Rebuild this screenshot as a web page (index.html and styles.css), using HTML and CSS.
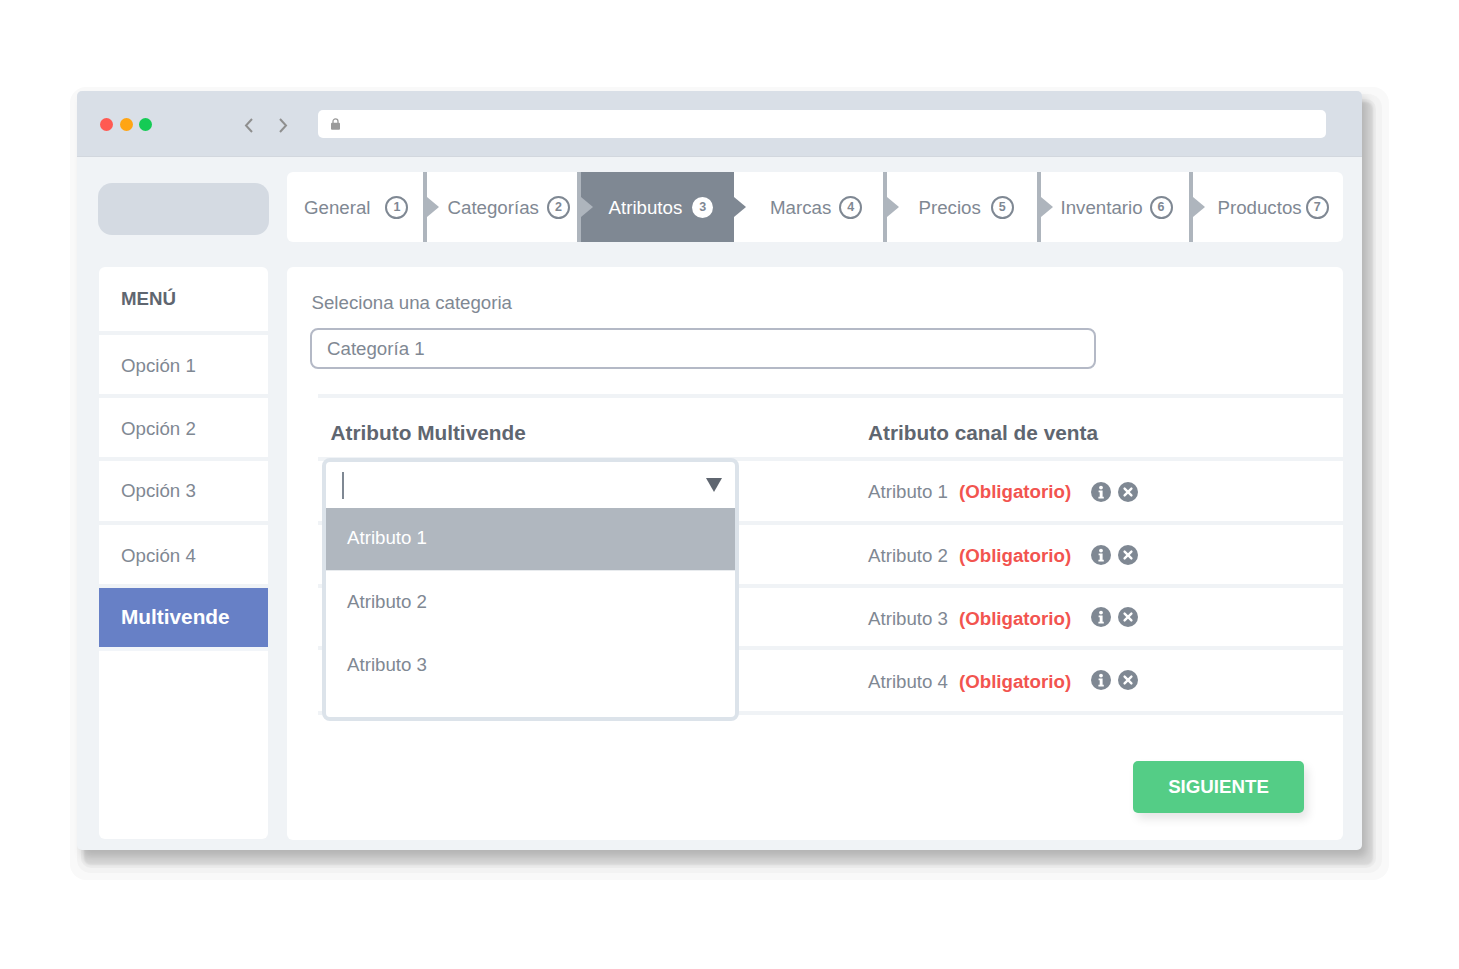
FILE: index.html
```html
<!DOCTYPE html>
<html lang="es">
<head>
<meta charset="utf-8">
<title>Multivende</title>
<link rel="stylesheet" href="styles.css">
</head>
<body>
<div class="window">
  <header class="titlebar">
    <div class="dots"><i class="dot red"></i><i class="dot orange"></i><i class="dot green"></i></div>
    <div class="nav">
      <svg width="11" height="17" viewBox="0 0 11 17"><path d="M9 2 3 8.5 9 15" fill="none" stroke="#8f8f8f" stroke-width="2"/></svg>
      <svg width="11" height="17" viewBox="0 0 11 17"><path d="M2 2l6 6.5L2 15" fill="none" stroke="#8f8f8f" stroke-width="2"/></svg>
    </div>
    <div class="url">
      <svg width="9" height="12" viewBox="0 0 9 12"><path d="M2 5V3.4a2.5 2.5 0 0 1 5 0V5" fill="none" stroke="#9a9a9a" stroke-width="1.3"/><rect y="4.8" width="9" height="7" rx="1" fill="#9a9a9a"/></svg>
    </div>
  </header>
  <div class="content">
    <div class="logo"></div>
    <nav class="tabs">
      <div class="tab t1"><span>General</span><b class="num">1</b></div>
      <div class="tab t2 sep"><span>Categorías</span><b class="num">2</b></div>
      <div class="tab t3 sep active"><span>Atributos</span><b class="num">3</b></div>
      <div class="tab t4 after-active"><span>Marcas</span><b class="num">4</b></div>
      <div class="tab t5 sep"><span>Precios</span><b class="num">5</b></div>
      <div class="tab t6 sep"><span>Inventario</span><b class="num">6</b></div>
      <div class="tab t7 sep"><span>Productos</span><b class="num">7</b></div>
    </nav>
    <aside class="side">
      <div class="side-item menu">MENÚ</div>
      <div class="side-item">Opción 1</div>
      <div class="side-item">Opción 2</div>
      <div class="side-item">Opción 3</div>
      <div class="side-item">Opción 4</div>
      <div class="side-item current">Multivende</div>
    </aside>
    <main class="main">
      <label class="label">Seleciona una categoria</label>
      <div class="field">Categoría 1</div>
      <section class="attrs">
        <div class="row head"><h3>Atributo Multivende</h3><h3>Atributo canal de venta</h3></div>
        <div class="row item"><span>Atributo 1</span><strong>(Obligatorio)</strong>
          <svg class="ico" viewBox="0 0 20 20"><circle cx="10" cy="10" r="10"/><circle cx="10" cy="5.6" r="1.9" class="w"/><path class="w" d="M7.6 8.5h4v6.2h1.2v1.8H7.4v-1.8h1.3v-4.4H7.6z"/></svg>
          <svg class="ico" viewBox="0 0 20 20"><circle cx="10" cy="10" r="10"/><path class="x" d="M6.6 6.6l6.8 6.8M13.4 6.6l-6.8 6.8"/></svg>
        </div>
        <div class="row item"><span>Atributo 2</span><strong>(Obligatorio)</strong>
          <svg class="ico" viewBox="0 0 20 20"><circle cx="10" cy="10" r="10"/><circle cx="10" cy="5.6" r="1.9" class="w"/><path class="w" d="M7.6 8.5h4v6.2h1.2v1.8H7.4v-1.8h1.3v-4.4H7.6z"/></svg>
          <svg class="ico" viewBox="0 0 20 20"><circle cx="10" cy="10" r="10"/><path class="x" d="M6.6 6.6l6.8 6.8M13.4 6.6l-6.8 6.8"/></svg>
        </div>
        <div class="row item"><span>Atributo 3</span><strong>(Obligatorio)</strong>
          <svg class="ico" viewBox="0 0 20 20"><circle cx="10" cy="10" r="10"/><circle cx="10" cy="5.6" r="1.9" class="w"/><path class="w" d="M7.6 8.5h4v6.2h1.2v1.8H7.4v-1.8h1.3v-4.4H7.6z"/></svg>
          <svg class="ico" viewBox="0 0 20 20"><circle cx="10" cy="10" r="10"/><path class="x" d="M6.6 6.6l6.8 6.8M13.4 6.6l-6.8 6.8"/></svg>
        </div>
        <div class="row item"><span>Atributo 4</span><strong>(Obligatorio)</strong>
          <svg class="ico" viewBox="0 0 20 20"><circle cx="10" cy="10" r="10"/><circle cx="10" cy="5.6" r="1.9" class="w"/><path class="w" d="M7.6 8.5h4v6.2h1.2v1.8H7.4v-1.8h1.3v-4.4H7.6z"/></svg>
          <svg class="ico" viewBox="0 0 20 20"><circle cx="10" cy="10" r="10"/><path class="x" d="M6.6 6.6l6.8 6.8M13.4 6.6l-6.8 6.8"/></svg>
        </div>
        <div class="dropdown">
          <div class="search"><i class="caret"></i><i class="arrow"></i></div>
          <div class="opt selected">Atributo 1</div>
          <div class="opt">Atributo 2</div>
          <div class="opt">Atributo 3</div>
        </div>
      </section>
      <button class="next">SIGUIENTE</button>
    </main>
  </div>
</div>
</body>
</html>
```
FILE: styles.css
```css
* { box-sizing: border-box; }
html, body { margin: 0; height: 100%; }
body {
  background: #fff;
  padding: 91px 0 0 77px;
  font-family: "Liberation Sans", Arial, sans-serif;
  font-size: 18.7px;
  color: #7f8893;
  overflow: hidden;
}
.window {
  width: 1285px;
  height: 759px;
  background: #f0f3f6;
  border-radius: 5px;
  box-shadow:
    5px 7px 9px rgba(0,0,0,.17),
    9px 13px 2px 2px #d8d8d8,
    9px 13px 0 5px #ebebeb,
    10px 13px 0 10px #f3f3f3,
    10px 13px 0 17px #f9f9f9;
  display: flex;
  flex-direction: column;
}
.titlebar {
  height: 66px;
  flex: none;
  background: #d9dfe7;
  border-bottom: 1px solid #d2d7de;
  border-radius: 5px 5px 0 0;
  display: flex;
  padding: 19px 36px 0 23px;
}
.dots { display: flex; gap: 6.5px; width: 143px; padding-top: 8px; }
.dot { width: 13px; height: 13px; border-radius: 50%; display: block; }
.red { background: #ff5a52; }
.orange { background: #ffa514; }
.green { background: #15cb55; }
.nav { display: flex; gap: 24px; width: 75px; padding-top: 7px; height: 28px; }
.url {
  flex: 1;
  height: 28px;
  background: #fff;
  border-radius: 5px;
  padding: 8px 13px;
  display: flex;
}
.content {
  flex: 1;
  display: grid;
  grid-template-columns: 171px 1056px;
  grid-template-rows: 70px 573px;
  column-gap: 18px;
  row-gap: 25px;
  padding: 15px 0 0 21px;
}
.logo {
  background: #d4dae2;
  border-radius: 14px;
  height: 52px;
  margin-top: 11px;
}
.tabs {
  display: flex;
  background: #fff;
  border-radius: 6px;
  height: 70px;
}
.tab {
  position: relative;
  display: flex;
  align-items: center;
  height: 70px;
  flex: none;
}
.tab span { padding-top: 1px; }
.sep { border-left: 4.5px solid #aeb5bd; }
.sep::after, .after-active::after {
  content: "";
  position: absolute;
  left: 0;
  top: 25px;
  width: 12px;
  height: 20px;
  background: #aeb5bd;
  clip-path: polygon(0 0, 100% 50%, 0 100%);
}
.after-active::after { background: #7f8893; }
.t1 { width: 136px; padding-left: 17px; gap: 15px; }
.t2 { width: 154px; padding-left: 20.5px; gap: 8px; }
.t3 { width: 157px; padding-left: 27.5px; gap: 10px; }
.t4 { width: 149px; padding-left: 36px; gap: 8px; }
.t5 { width: 154px; padding-left: 31.5px; gap: 10px; }
.t6 { width: 152px; padding-left: 19.5px; gap: 7px; }
.t7 { width: 154px; padding-left: 24.5px; gap: 4px; }
.active { background: #7f8893; color: #fff; }
.num {
  width: 23px;
  height: 23px;
  border: 2px solid #7f8893;
  border-radius: 50%;
  font-size: 12.5px;
  display: flex;
  align-items: center;
  justify-content: center;
}
.active .num { background: #fff; color: #7f8893; width: 21px; height: 21px; border: 0; }
.side {
  background: #fff;
  border-radius: 6px;
  margin: 0 1px 1px;
  overflow: hidden;
}
.side-item {
  height: 63px;
  border-bottom: 4px solid #f0f3f6;
  padding: 2px 0 0 22px;
  display: flex;
  align-items: center;
}
.side-item.menu { height: 68px; font-weight: 700; color: #5f6670; padding-top: 0; }
.side-item.current {
  background: #6780c6;
  background-clip: padding-box;
  color: #fff;
  font-weight: 700;
  font-size: 20.8px;
  padding: 0 0 2px 22px;
  border-bottom-color: #f2f5f9;
}
.side-item:nth-child(4) { height: 64px; padding-top: 0; }
.main {
  background: #fff;
  border-radius: 6px;
  display: flex;
  flex-direction: column;
}
.label { display: block; height: 22px; line-height: 22px; margin: 25px 0 14px 24.5px; }
.field {
  width: 786px;
  height: 41px;
  margin-left: 23px;
  border: 2px solid #b4b9c6;
  border-radius: 8px;
  padding-left: 15px;
  display: flex;
  align-items: center;
}
.attrs {
  position: relative;
  margin: 25px 0 0 31px;
  border-bottom: 4px solid #f0f3f6;
}
.row { border-top: 4px solid #f0f3f6; display: grid; align-items: center; height: 63px; }
.head { grid-template-columns: 550px 1fr; padding-left: 12.5px; }
.head h3 { margin: 0; font-size: 20.8px; color: #5f6670; line-height: 70px; height: 59px; }
.head h3 + h3 { margin-left: -12.5px; }
.item { grid-template-columns: 91px 132px 27px 20px; padding-left: 550px; }
.item span, .item strong { padding-top: 1px; }
.item:nth-child(2) { height: 64px; }
.item:nth-child(2) .ico { margin-top: 1px; }
.item:nth-child(3) span, .item:nth-child(3) strong { padding-top: 2px; }
.item:nth-child(4) { height: 62px; }
.item:nth-child(4) span, .item:nth-child(4) strong { padding-top: 3px; }
.item:nth-child(5) { height: 65px; }
.item:nth-child(5) span, .item:nth-child(5) strong { padding-top: 2px; }
.item:nth-child(5) .ico { margin-top: -1px; }
.item strong { color: #f2544f; font-size: 18.7px; }
.ico { width: 20px; height: 20px; display: block; }
.ico circle { fill: #7f8893; }
.ico .w { fill: #fff; }
.ico .x { stroke: #fff; stroke-width: 2.4; fill: none; stroke-linecap: round; }
.dropdown {
  position: absolute;
  left: 4px;
  top: 64px;
  width: 417px;
  height: 263px;
  background: #fff;
  border: 4px solid #dce3ea;
  border-radius: 8px;
  overflow: hidden;
}
.search {
  height: 46px;
  display: flex;
  justify-content: space-between;
  align-items: center;
  padding: 0 13px 0 16px;
}
.caret { width: 2px; height: 27px; background: #7f8893; display: block; }
.arrow {
  width: 16px;
  height: 14px;
  background: #5f6670;
  clip-path: polygon(0 0, 100% 0, 50% 100%);
  display: block;
}
.opt { height: 63px; padding: 0 0 2px 21px; display: flex; align-items: center; }
.opt.selected { background: #b0b7bf; color: #fff; padding-bottom: 3px; border-bottom: 1px solid #e8ebee; }
.next {
  align-self: flex-end;
  margin: 46px 39px 0 0;
  width: 171px;
  height: 52px;
  background: #54cd86;
  border: 0;
  border-radius: 5px;
  color: #fff;
  font: 700 18.7px "Liberation Sans", Arial, sans-serif;
  box-shadow: 4px 6px 10px rgba(0,0,0,.1);
}
```
